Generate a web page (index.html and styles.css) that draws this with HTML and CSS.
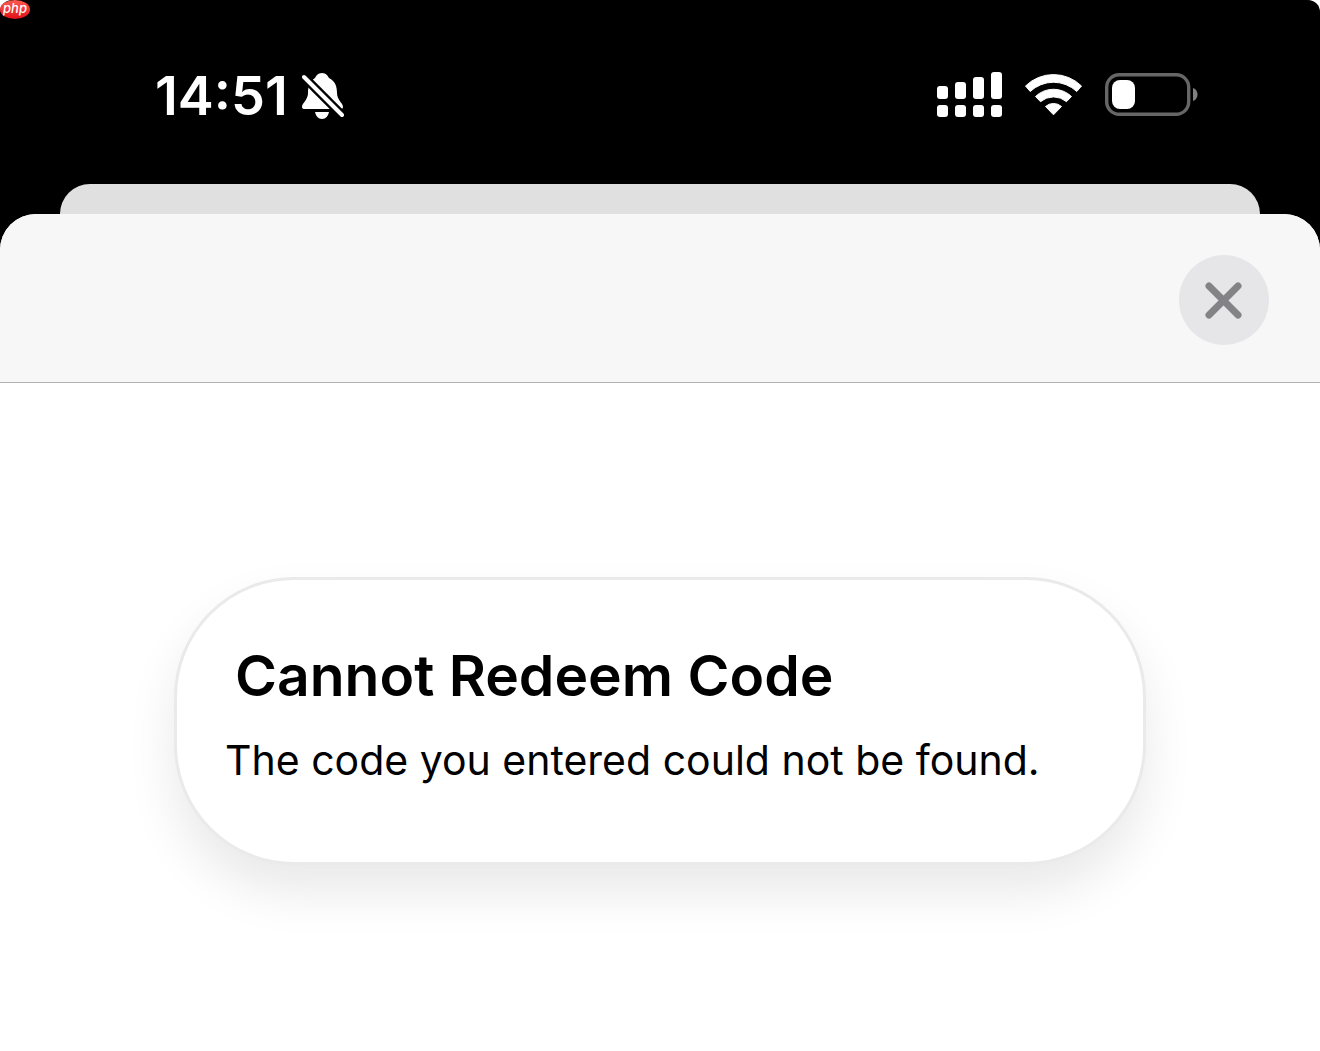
FILE: index.html
```
<!DOCTYPE html>
<html lang="en">
<head>
  <meta charset="UTF-8" />
  <meta name="viewport" content="width=device-width, initial-scale=1.0"/>
  <title>Redeem Code</title>
  <link rel="stylesheet" href="styles.css">
</head>
<body>
  <span class="badge">php</span>

  <div class="status-bar">
    <div class="status-left">
      <span class="time">14:51</span>
      <svg width="42" height="46" viewBox="0 0 42 46" aria-label="Silent mode">
        <path fill="#fff" d="M20 0C24 0 26 3 27 5C33 8 35 13 35 20C35 27 41 30 41 34Q41 36 38 36H3Q0 36 0 34C0 30 6 27 6 20C6 13 8 8 13 5C14 3 16 0 20 0Z"/>
        <path fill="#fff" d="M13 39H27C26 43 24 46 20 46S14 43 13 39Z"/>
        <path stroke="#000" stroke-width="9" d="M-2 0L45 47"/>
        <path stroke="#fff" stroke-width="4" stroke-linecap="round" d="M2 4L40 42"/>
      </svg>
    </div>
    <div class="status-right">
      <svg width="66" height="46" viewBox="0 0 66 46" fill="#fff" aria-label="Signal">
        <rect x="0" y="14" width="11" height="13" rx="3"/>
        <rect x="18" y="10" width="11" height="17" rx="3"/>
        <rect x="36" y="5" width="11" height="22" rx="3"/>
        <rect x="54" y="0" width="11" height="27" rx="3"/>
        <rect x="0" y="33" width="11" height="12" rx="3"/>
        <rect x="18" y="33" width="11" height="12" rx="3"/>
        <rect x="36" y="33" width="11" height="12" rx="3"/>
        <rect x="54" y="33" width="11" height="12" rx="3"/>
      </svg>
      <svg width="58" height="44" viewBox="0 0 58 44" fill="#fff" stroke="#fff" stroke-linejoin="round" aria-label="Wi-Fi">
        <path d="M.5 13A40 40 0 0 1 56.5 13L51.8 18.5A34 34 0 0 0 5.200 18.5Z"/>
        <path d="M10.5 23.5A26 26 0 0 1 46.5 23.5L41.5 28.7A20 20 0 0 0 15.500 28.7Z"/>
        <path d="M20.5 33.5A12 12 0 0 1 36.5 33.5L28.5 41.8Z"/>
      </svg>
      <svg width="94" height="44" viewBox="0 0 94 44" aria-label="Battery low">
        <rect x="1.7" y="1.7" width="82" height="39.6" rx="12.5" fill="none" stroke="#666" stroke-width="3.4"/>
        <rect x="7" y="7" width="23" height="29" rx="8" fill="#fff"/>
        <path fill="#808080" d="M88 15C94 17 94 26 88 28Z"/>
      </svg>
    </div>
  </div>

  <div class="back-sheet"></div>

  <main class="sheet">
    <header class="sheet-header">
      <button class="close" type="button" aria-label="Close">
        <svg width="38" height="38" viewBox="0 0 38 38">
          <path stroke="#838387" stroke-width="7" stroke-linecap="round" d="M4 5L33 34M33 5L4 34"/>
        </svg>
      </button>
    </header>

    <section class="card">
      <h1>Cannot Redeem Code</h1>
      <p>The code you entered could not be found.</p>
    </section>
  </main>
</body>
</html>
```
FILE: styles.css
```
* {
  box-sizing: border-box;
}

html {
  background: #fff;
}

body {
  margin: 0;
  min-height: 100vh;
  display: flex;
  flex-direction: column;
  background: #000;
  border-radius: 12px 12px 0 0;
  font-family: Inter, sans-serif;
}

.badge {
  position: absolute;
  top: 0;
  left: 0;
  width: 30px;
  height: 19px;
  border-radius: 50%;
  background: linear-gradient(#ff5a50, #e01018);
  color: #fff;
  font-size: 13px;
  font-style: italic;
  font-weight: 500;
  line-height: 17px;
  text-align: center;
}

.status-bar {
  display: flex;
  justify-content: space-between;
  align-items: center;
  height: 184px;
  padding: 6px 121px 0 155px;
}

.status-left {
  display: flex;
  align-items: center;
  gap: 14px;
  padding-top: 2px;
}

.time {
  color: #fff;
  font-size: 54px;
  font-weight: 600;
  line-height: 62px;
}

.status-right {
  display: flex;
  align-items: center;
  gap: 22px;
}

svg {
  display: block;
}

.back-sheet {
  height: 30px;
  margin: 0 60px;
  background: #e0e0e0;
  border-radius: 32px 32px 0 0;
}

.sheet {
  flex: 1;
  background: #fff;
  border-radius: 36px 36px 0 0;
}

.sheet-header {
  display: flex;
  justify-content: flex-end;
  padding: 41px 51px 37px;
  background: #f7f7f7;
  border-bottom: 1px solid #b0b0b0;
  border-radius: 36px 36px 0 0;
}

.close {
  display: flex;
  align-items: center;
  justify-content: center;
  width: 90px;
  height: 90px;
  padding: 0;
  border: none;
  border-radius: 50%;
  background: #e6e6e8;
  cursor: pointer;
}

.card {
  margin: 194px 174px 0;
  padding: 61px 48px 76px;
  border: 3px solid #eaeaea;
  border-radius: 120px;
  background: #fff;
  box-shadow: 0 27px 50px rgba(0, 0, 0, 0.09);
}

.card h1 {
  margin: 0 0 23px;
  padding-left: 10px;
  font-size: 57px;
  font-weight: 600;
  line-height: 70px;
}

.card p {
  margin: 0;
  font-size: 41px;
  line-height: 52px;
}
```
